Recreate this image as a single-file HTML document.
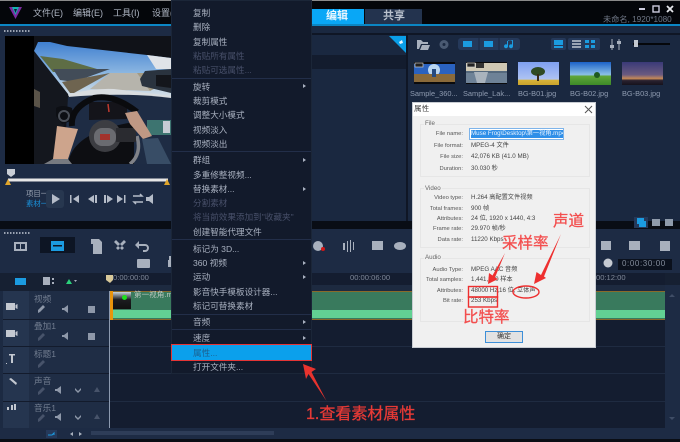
<!DOCTYPE html>
<html lang="zh"><head><meta charset="utf-8"><title>属性</title>
<style>
*{box-sizing:border-box}
html,body{margin:0;padding:0;background:#0b0f18}
#p{position:relative;width:680px;height:442px;overflow:hidden;background:#1c2a42;font-family:"Liberation Sans","Noto Sans CJK SC",sans-serif;filter:blur(.35px)}
#p div,#p svg{position:absolute}
.t{white-space:nowrap;line-height:12px;height:12px}
.m{left:193px;font-size:8.6px;color:#a9b1c0;white-space:nowrap;line-height:12px;height:12px}
.d{color:#48506a}
.a{left:303px;width:0;height:0;border-left:3px solid #a9b1c0;border-top:2px solid transparent;border-bottom:2px solid transparent}
.s{left:172px;width:139px;height:1px;background:#222e49}
.l{font-size:5.8px;color:#555;white-space:nowrap;line-height:10px;height:10px;right:217px;text-align:right}
.v{font-size:6.2px;color:#444;white-space:nowrap;line-height:10px;height:10px;left:471px}
.g{left:420px;width:170px;border:1px solid #e6e6e6}
.gt{left:424px;font-size:6.2px;color:#666;line-height:10px;height:10px;background:#f0f0f0;padding:0 1px}
.th{font-size:7.4px;color:#8f9bb0;white-space:nowrap;line-height:10px;height:10px;top:89px}
.tr{font-size:8.6px;color:#727d90;left:34px;line-height:12px;height:12px;white-space:nowrap}
.ann{color:#f34f4f;font-size:15.5px;-webkit-text-stroke:.3px currentColor;line-height:18px;height:18px;white-space:nowrap}
</style></head><body>
<div id="p">
<!-- top bar -->
<div style="left:0;top:0;width:680px;height:25px;background:#04060a"></div>
<div style="left:0;top:0;width:680px;height:1px;background:#8a8a8a"></div>
<div style="left:0;top:24px;width:680px;height:2px;background:#0b86c4"></div>
<svg style="left:9px;top:6px" width="13" height="13" viewBox="0 0 13 13"><path d="M0 1h13L6.500 13z" fill="#7b2ba0"/><path d="M3 1h7L6.500 9z" fill="#14b4b0"/><path d="M5 3h3L6.500 7z" fill="#101a30"/></svg>
<div class="t" style="left:33px;top:7px;font-size:9px;color:#aeb5c2">文件(E)</div>
<div class="t" style="left:73px;top:7px;font-size:9px;color:#aeb5c2">编辑(E)</div>
<div class="t" style="left:113px;top:7px;font-size:9px;color:#aeb5c2">工具(I)</div>
<div class="t" style="left:152px;top:7px;font-size:9px;color:#aeb5c2">设置(S)</div>
<div style="left:311px;top:9px;width:53px;height:15px;background:#09a7f6"></div>
<div class="t" style="left:326px;top:10px;font-size:11px;font-weight:bold;color:#e8f6ff">编辑</div>
<div style="left:365px;top:9px;width:57px;height:15px;background:#23334e"></div>
<div class="t" style="left:383px;top:10px;font-size:11px;font-weight:bold;color:#b8c0cc">共享</div>
<div class="t" style="left:603px;top:14px;font-size:8.2px;color:#6f7786">未命名, 1920*1080</div>
<svg style="left:636px;top:4px" width="40" height="10" viewBox="0 0 40 10"><path d="M3 5h6" stroke="#ccd" stroke-width="2"/><rect x="17" y="2" width="6" height="6" fill="none" stroke="#ccd" stroke-width="1.400"/><path d="M31 2l6 6M37 2l-6 6" stroke="#e4e6ea" stroke-width="1.800"/></svg>

<!-- preview -->
<div style="left:0;top:26px;width:171px;height:195px;background:#1d2b44"></div>
<div style="left:4px;top:30px;width:26px;height:2px;background-image:linear-gradient(90deg,#9aa3b2 50%,transparent 50%);background-size:3px 2px"></div>
<div style="left:5px;top:36px;width:166px;height:128px;background:#000"></div>
<svg style="left:34px;top:36px" width="137" height="128" viewBox="0 0 137 128">
<defs><linearGradient id="sk" x1="0" y1="0" x2="0" y2="1"><stop offset="0" stop-color="#3f7fd0"/><stop offset=".6" stop-color="#8fb9e2"/><stop offset="1" stop-color="#d5dfe6"/></linearGradient></defs>
<rect width="137" height="128" fill="#101218"/>
<path d="M0 15L4 6H16L33 10L113 19L137 22V60H34z" fill="url(#sk)"/>
<path d="M113 19L137 22V33L122 33z" fill="#dfe3e8"/>
<path d="M6 20L29 23L63 33L68 36H19z" fill="#5e6d45"/>
<path d="M19 33H76L40 46L26 44z" fill="#424c58"/>
<path d="M28 46L76 37L40 57H36z" fill="#6e6450"/>
<path d="M56 53L76 37H103L116 55z" fill="#b6b4ac"/>
<path d="M103 37H137V44L116 55z" fill="#a49a82"/>
<path d="M106 43L111 35L137 33V57L108 50z" fill="#2a333f"/>
<path d="M122 39H137V52L122 50z" fill="#14161c"/>
<path d="M36 58Q60 52 80 53L137 60V64L34 62z" fill="#d9dde0"/>
<path d="M0 15L34 58L36 66L20 128H0z" fill="#14171e"/>
<path d="M0 53L6 56V72L0 70z" fill="#5a5348"/>
<path d="M34 61Q90 56 137 62V128H30z" fill="#1e2c44"/>
<path d="M22 72Q28 68 38 72L40 84L28 88L22 80z" fill="#0d0f14"/><circle cx="30" cy="80" r="5" fill="none" stroke="#4a4f58" stroke-width="2"/>
<path d="M55 66H93V83L55 84z" fill="#14141a"/><path d="M74 68l1 8" stroke="#c03a30" stroke-width="1.500"/>
<path d="M34 128Q38 96 100 86V128z" fill="#0d0e12"/>
<path d="M113 84H137V99H113z" fill="#3d7470"/><path d="M129 85h7v12h-7z" fill="#c7ccd4"/>
<path d="M38 90Q36 72 60 62Q80 58 103 76" fill="none" stroke="#0a0b0e" stroke-width="6"/>
<path d="M103 100Q108 118 96 128" fill="none" stroke="#808288" stroke-width="3.500"/>
<circle cx="71" cy="100" r="16" fill="#3c3d42"/><rect x="60" y="92" width="22" height="18" rx="8" fill="#6a6b70"/><rect x="66" y="98" width="10" height="6" fill="#a3322c"/>
<path d="M82 92h20v14H82z" fill="#2a2b30"/>
<path d="M23 90L44 93L34 123L19 123z" fill="#cda48c"/><path d="M19 123L34 123L38 128H10z" fill="#777a80"/>
<path d="M91 77L103 75L118 100L109 103L96 88z" fill="#bf9884"/>
<path d="M108 103L124 102L137 128H113z" fill="#384d66"/>
</svg>
<svg style="left:5px;top:168px" width="166" height="18" viewBox="0 0 166 18"><path d="M2 1h8v5l-4 3-4-3z" fill="#c9ced6"/><rect x="3" y="10.500" width="160" height="3" fill="#e6e6e6"/><path d="M3 11l-3 6h6zM162 11l-3 6h6z" fill="#e0a52a"/></svg>
<div class="t" style="left:26px;top:188px;font-size:7.4px;color:#9aa3b2">项目一</div>
<div class="t" style="left:26px;top:198px;font-size:7.4px;color:#1a93dd">素材一</div>
<div style="left:46px;top:190px;width:18px;height:18px;background:#27374f;border-radius:3px"></div>
<svg style="left:46px;top:190px" width="115" height="18" viewBox="0 0 115 18" fill="#b5bcc8">
<path d="M6 4l8 5-8 5z"/><path d="M24 5h1.500v8H24zM33 5v8l-6-4z"/><path d="M48 5v8l-6-4zM49 5h2v8h-2z"/><path d="M58 5h2v8h-2zM61 5v8l6-4z"/><path d="M71 5l6 4-6 4zM78 5h1.500v8H78z"/>
<path d="M87 6h9l-2-2M97 12h-9l2 2" fill="none" stroke="#b5bcc8" stroke-width="1.500"/><path d="M100 7h3l4-3v10l-4-3h-3z"/></svg>

<!-- lower-left header strip -->
<div style="left:0;top:221px;width:680px;height:8px;background:#090d15"></div>
<!-- library panel -->
<div style="left:312px;top:26px;width:368px;height:195px;background:#1a2840"></div>
<div style="left:312px;top:55px;width:94px;height:14px;background:#131c2e"></div>
<div style="left:406px;top:35px;width:2px;height:186px;background:#0f1625"></div>
<div style="left:312px;top:33px;width:368px;height:2px;background:#0f1625"></div>
<svg style="left:389px;top:36px" width="17" height="17" viewBox="0 0 17 17"><path d="M0 0h17v17z" fill="#0a9fe8"/><path d="M10 6l3-2 1 3-3 1z" fill="#eaf6ff"/></svg>
<!-- lib toolbar -->
<svg style="left:416px;top:36px" width="262" height="16" viewBox="0 0 262 16">
<path d="M1 4h4l2 2h5v2H5l-2 5H1zM4 14l2-5h8l-2 5z" fill="#a8b0bd"/>
<circle cx="28" cy="8.500" r="4.500" fill="#4a5a72"/><circle cx="28" cy="8.500" r="1.500" fill="#1a2840"/>
<rect x="42" y="2" width="62" height="12" rx="3" fill="#25395a"/><path d="M63 2v12M83 2v12" stroke="#1a2840"/>
<rect x="47" y="5" width="9" height="6" fill="#1b9be0"/><rect x="68" y="5" width="9" height="6" fill="#1b9be0"/><path d="M92 4v6a2 2 0 1 1-1-1.500V5l6-1v6a2 2 0 1 1-1-1.500V5z" fill="#1b9be0"/>
<rect x="135" y="2" width="15" height="12" rx="2" fill="#25395a"/><rect x="152" y="2" width="32" height="12" rx="2" fill="#25395a"/>
<rect x="138" y="4" width="9" height="5" fill="#1b9be0"/><rect x="138" y="10" width="9" height="2" fill="#1b9be0"/>
<path d="M156 4h9v2h-9zM156 7h9v2h-9zM156 10h9v2h-9z" fill="#9aa5b5"/>
<path d="M169 4h4v3h-4zM175 4h4v3h-4zM169 9h4v3h-4zM175 9h4v3h-4z" fill="#1b9be0"/>
<path d="M196 3v11M203 3v11" stroke="#a8b0bd"/><rect x="194" y="9" width="4" height="3" fill="#a8b0bd"/><rect x="201" y="5" width="4" height="3" fill="#a8b0bd"/>
<rect x="217" y="7" width="37" height="2" fill="#05070b"/><rect x="218" y="4" width="4" height="7" fill="#c4c9d1"/>
</svg>
<!-- thumbs -->
<svg style="left:414px;top:62px" width="41" height="22" viewBox="0 0 41 22"><rect width="41" height="22" fill="#0a0a0c"/><rect y="2" width="41" height="11" fill="#2a62c0"/><circle cx="20" cy="8" r="6" fill="#b9d6f2"/><rect y="12" width="41" height="8" fill="#8a6a3a"/><path d="M18 7h4v8h-4z" fill="#254a80"/><rect x="1" y="1" width="8" height="4" fill="#222" stroke="#ccc" stroke-width=".7"/></svg>
<svg style="left:466px;top:62px" width="41" height="22" viewBox="0 0 41 22"><rect width="41" height="22" fill="#0a0a0c"/><rect y="1" width="41" height="9" fill="#cfc8b4"/><rect y="9" width="41" height="2" fill="#55697d"/><rect y="11" width="41" height="10" fill="#6e8297"/><path d="M8 10h14l-3 11H11z" fill="#a9b3bd"/><rect x="1" y="1" width="8" height="4" fill="#222" stroke="#ccc" stroke-width=".7"/><rect x="10" y="1" width="8" height="5" fill="#333"/></svg>
<div style="left:518px;top:62px;width:41px;height:23px;background:linear-gradient(#7fa0f0,#aec3f3 75%,#d8b43a 78%,#caa32c)"></div>
<div style="left:570px;top:62px;width:41px;height:23px;background:linear-gradient(#1c62c8,#8cc0e8 55%,#5fa63a 62%,#3d8a28)"></div>
<div style="left:622px;top:62px;width:41px;height:23px;background:linear-gradient(#3a3a78,#6a5a80 55%,#c88a58 72%,#2a2230 80%,#16121c)"></div>
<div style="left:531px;top:67px;width:14px;height:9px;border-radius:50%;background:#2f4a24"></div><div style="left:537px;top:74px;width:2px;height:7px;background:#3a2a18"></div>
<div style="left:594px;top:72px;width:6px;height:6px;border-radius:50%;background:#1f5a20"></div>
<div class="th" style="left:410px">Sample_360...</div>
<div class="th" style="left:463px">Sample_Lak...</div>
<div class="th" style="left:518px">BG-B01.jpg</div>
<div class="th" style="left:570px">BG-B02.jpg</div>
<div class="th" style="left:622px">BG-B03.jpg</div>
<svg style="left:634px;top:216px" width="42" height="12" viewBox="0 0 42 12"><rect x="0" y="1" width="14" height="11" fill="#25395a"/><rect x="3" y="2" width="7" height="6" fill="#1b9be0"/><rect x="5" y="5" width="7" height="6" fill="#1b9be0"/><path d="M18 3h8v7h-8zM31 3h8v7h-8z" fill="#8f9bab"/></svg>

<!-- timeline toolbar -->
<div style="left:0;top:229px;width:680px;height:44px;background:#1d2b44"></div>
<div style="left:4px;top:232px;width:26px;height:2px;background-image:linear-gradient(90deg,#9aa3b2 50%,transparent 50%);background-size:3px 2px"></div>
<div style="left:40px;top:237px;width:35px;height:16px;background:#0d1524"></div>
<svg style="left:0;top:232px" width="680" height="40" viewBox="0 0 680 40" fill="#a8b0bd">
<path d="M14 10h13v9H14zM16 12v5h4v-5zM21 12v5h4v-5z" fill-rule="evenodd"/>
<rect x="51" y="9" width="13" height="10" fill="#1b9be0"/><rect x="53" y="13" width="9" height="1.500" fill="#0d1524"/>
<path d="M91 7h8l3 3v12h-9V12h-2z"/><path d="M116 8l8 8-2 2-8-8zM124 8l-8 8 2 2 8-8z"/><path d="M139 12h6a4 4 0 0 1 0 8h-2v-2h2a2 2 0 0 0 0-4h-6v3l-4-4 4-4z"/>
<rect x="137" y="27" width="13" height="9" rx="1"/><path d="M168 28h5v7h-5zM169 24h3v4h-3z"/>
<circle cx="318" cy="14" r="5"/><circle cx="323" cy="17" r="2" fill="#d01818"/>
<path d="M343 11h2v7h-2zM347 9h1v11h-1zM350 8h1v12h-1zM353 10h1v8h-1z"/><path d="M372 9h11v9h-11z"/><ellipse cx="400" cy="14" rx="6" ry="4"/>
<path d="M601 9h10v9h-10z"/><path d="M629 9h11v9h-11z"/><path d="M660 9h10v10h-10z"/>
<circle cx="608" cy="31" r="4.500" fill="#c5cad2"/>
</svg>
<div style="left:618px;top:259px;width:54px;height:11px;background:#0b111d"></div>
<div class="t" style="left:622px;top:258px;font-size:8px;letter-spacing:.6px;color:#828b9a">0:00:30:00</div>

<!-- ruler -->
<div style="left:0;top:273px;width:680px;height:18px;background:#162032"></div>
<div style="left:110px;top:273px;width:555px;height:12px;background:#141d30"></div>
<div style="left:110px;top:285px;width:555px;height:6px;background:#1d2a40"></div>
<div class="t" style="left:113px;top:272px;font-size:7.6px;color:#7f8899">0:00:00:00</div>
<div class="t" style="left:350px;top:272px;font-size:7.6px;color:#7f8899">00:00:06:00</div>
<div class="t" style="left:596px;top:272px;font-size:7.6px;color:#7f8899">00:12:00</div>
<svg style="left:10px;top:275px" width="104" height="12" viewBox="0 0 104 12"><path d="M5 3h11v7H5z" fill="#1b9be0"/><path d="M33 2h7v8h-7zM42 3h2v2h-2zM42 7h2v2h-2z" fill="#a8b0bd"/><path d="M56 9l3-5 3 5z" fill="#2bd07a"/><path d="M64 5h3l-1.500 2z" fill="#a8b0bd"/><path d="M96 0h7v5l-3 3-4-3z" fill="#d8c99a"/></svg>

<!-- track headers -->
<div style="left:3px;top:291px;width:106px;height:137px;background:#1f2d45"></div>
<div style="left:3px;top:291px;width:26px;height:137px;background:#25354f"></div>
<div style="left:3px;top:319px;width:106px;height:1px;background:#131b2c"></div>
<div style="left:3px;top:346px;width:106px;height:1px;background:#131b2c"></div>
<div style="left:3px;top:373px;width:106px;height:1px;background:#131b2c"></div>
<div style="left:3px;top:401px;width:106px;height:1px;background:#131b2c"></div>
<div class="tr" style="top:293px">视频</div><div class="tr" style="top:320px">叠加1</div><div class="tr" style="top:348px">标题1</div><div class="tr" style="top:375px">声音</div><div class="tr" style="top:402px">音乐1</div>
<svg style="left:3px;top:291px" width="106" height="137" viewBox="0 0 106 137" fill="#c3c8d0">
<path d="M3 12h9v7H3zM12.500 14l2-1v5l-2-1z"/><path d="M3 39h9v7H3zM12.500 41l2-1v5l-2-1z"/>
<path d="M3 72h1v1H3zM6 63h6v1.500h-2V72H8v-7.500H6z"/><path d="M6 88l2-1 6 5-1 2z"/><path d="M4 116h2v3H4zM8 114h2v5H8zM11 113h2v6h-2z"/>
<g fill="#8e98a9"><path d="M35 19l5-5 2 2-5 5-2 1zM59 17h2l4-3v8l-4-3h-2zM85 15h7v7h-7z"/><path d="M59 44h2l4-3v8l-4-3h-2zM85 42h7v7h-7z"/><path d="M52 98h2l4-3v8l-4-3h-2zM52 125h2l4-3v8l-4-3h-2z"/><path d="M72 99l3 3 3-3v-2l-3 3-3-3zM72 126l3 3 3-3v-2l-3 3-3-3z"/></g>
<g fill="#47536a"><path d="M35 47l5-5 2 2-5 5-2 1zM35 74l5-5 2 2-5 5-2 1zM35 101l5-5 2 2-5 5-2 1zM35 128l5-5 2 2-5 5-2 1zM91 101l3-5 3 5zM91 128l3-5 3 5z"/></g>
</svg>
<!-- tracks -->
<div style="left:109px;top:291px;width:556px;height:137px;background:#141d30"></div>
<div style="left:109px;top:291px;width:1px;height:137px;background:#8c9ab0"></div>
<div style="left:110px;top:319px;width:555px;height:1px;background:#1f2b41"></div>
<div style="left:110px;top:346px;width:555px;height:1px;background:#1f2b41"></div>
<div style="left:110px;top:373px;width:555px;height:1px;background:#1f2b41"></div>
<div style="left:110px;top:401px;width:555px;height:1px;background:#1f2b41"></div>
<div style="left:110px;top:291px;width:555px;height:29px;background:#397a5d;border-top:1px solid #8a6a2a;border-bottom:1px solid #8a6a2a"></div>
<div style="left:113px;top:310px;width:552px;height:8px;background:#62d193"></div>
<div style="left:110px;top:291px;width:3px;height:29px;background:#e8940c"></div>
<div style="left:113px;top:292px;width:18px;height:17px;background:linear-gradient(#c9d4dd,#1c1c20 45%,#111)"></div>
<div style="left:122px;top:295px;width:5px;height:5px;border-radius:50%;background:#1de01d"></div>
<div class="t" style="left:134px;top:289px;font-size:7.6px;color:#b9c5bf">第一视角.mp4</div>
<!-- scrollbar, bottom -->
<div style="left:665px;top:285px;width:15px;height:143px;background:#1d2b44"></div>
<svg style="left:668px;top:292px" width="8" height="130" viewBox="0 0 8 130" fill="#3f4d66"><path d="M1 5l3-3 3 3zM1 125l3 3 3-3z"/></svg>
<div style="left:0;top:428px;width:680px;height:12px;background:#1d2b44"></div>
<div style="left:0;top:439px;width:680px;height:3px;background:#0a0e15"></div>
<div style="left:91px;top:431px;width:183px;height:4px;background:#2e3d58"></div>
<svg style="left:46px;top:429px" width="40" height="10" viewBox="0 0 40 10"><rect width="11" height="8" y="1" fill="#25395a"/><path d="M2 6h4l2-2v2" stroke="#1b9be0" fill="none"/><path d="M24 5l3-2v4zM33 3l3 2-3 2z" fill="#a8b0bd"/></svg>

<!-- context menu -->
<div style="left:171px;top:0;width:141px;height:374px;background:#121a2b;border:1px solid #1b2638"></div>
<div class="m" style="top:7px">复制</div>
<div class="m" style="top:21px">删除</div>
<div class="m" style="top:36px">复制属性</div>
<div class="m d" style="top:50px">粘贴所有属性</div>
<div class="m d" style="top:64px">粘贴可选属性...</div>
<div class="s" style="top:78px"></div>
<div class="m" style="top:81px">旋转</div><div class="a" style="top:84px"></div>
<div class="m" style="top:95px">裁剪模式</div>
<div class="m" style="top:109px">调整大小模式</div>
<div class="m" style="top:124px">视频淡入</div>
<div class="m" style="top:138px">视频淡出</div>
<div class="s" style="top:151px"></div>
<div class="m" style="top:154px">群组</div><div class="a" style="top:158px"></div>
<div class="m" style="top:169px">多重修整视频...</div>
<div class="m" style="top:183px">替换素材...</div><div class="a" style="top:187px"></div>
<div class="m d" style="top:197px">分割素材</div>
<div class="m d" style="top:211px">将当前效果添加到"收藏夹"</div>
<div class="m" style="top:226px">创建智能代理文件</div>
<div class="s" style="top:239px"></div>
<div class="m" style="top:243px">标记为 3D...</div>
<div class="m" style="top:257px">360 视频</div><div class="a" style="top:261px"></div>
<div class="m" style="top:271px">运动</div><div class="a" style="top:275px"></div>
<div class="m" style="top:286px">影音快手模板设计器...</div>
<div class="m" style="top:300px">标记可替换素材</div>
<div class="s" style="top:314px"></div>
<div class="m" style="top:316px">音频</div><div class="a" style="top:320px"></div>
<div class="s" style="top:329px"></div>
<div class="m" style="top:332px">速度</div><div class="a" style="top:336px"></div>
<div style="left:171px;top:344px;width:141px;height:17px;background:#0ba0ec;border:1.500px solid #e53535"></div>
<div class="m" style="top:347px;color:#1d5f8e">属性...</div>
<div class="m" style="top:361px">打开文件夹...</div>

<!-- dialog -->
<div style="left:412px;top:102px;width:184px;height:246px;background:#f0f0f0;border:1px solid #c8ccd2"></div>
<div style="left:413px;top:103px;width:182px;height:13px;background:#fff"></div>
<div class="t" style="left:414px;top:103px;font-size:7.6px;color:#444">属性</div>
<svg style="left:584px;top:105px" width="9" height="9" viewBox="0 0 9 9"><path d="M1 1l7 7M8 1l-7 7" stroke="#555"/></svg>
<div class="g" style="top:124px;height:53px"></div><div class="gt" style="top:119px">File</div>
<div class="g" style="top:188px;height:60px"></div><div class="gt" style="top:184px">Video</div>
<div class="g" style="top:258px;height:64px"></div><div class="gt" style="top:253px">Audio</div>
<div class="l" style="top:129px">File name:</div>
<div style="left:469px;top:128px;width:95px;height:12px;background:#fff;border:1px solid #7eb4ea"></div>
<div style="left:471px;top:130px;width:92px;height:8px;background:#2f8fe8"></div>
<div class="v" style="top:129px;color:#e8f3ff;width:92px;overflow:hidden">Muse Frog\Desktop\第一视角.mp4</div>
<div class="l" style="top:141px">File format:</div><div class="v" style="top:141px">MPEG-4 文件</div>
<div class="l" style="top:152px">File size:</div><div class="v" style="top:152px">42,076 KB (41.0 MB)</div>
<div class="l" style="top:164px">Duration:</div><div class="v" style="top:164px">30.030 秒</div>
<div class="l" style="top:193px">Video type:</div><div class="v" style="top:193px">H.264 高配置文件视频</div>
<div class="l" style="top:204px">Total frames:</div><div class="v" style="top:204px">900 帧</div>
<div class="l" style="top:214px">Attributes:</div><div class="v" style="top:214px">24 位, 1920 x 1440, 4:3</div>
<div class="l" style="top:224px">Frame rate:</div><div class="v" style="top:224px">29.970 帧/秒</div>
<div class="l" style="top:235px">Data rate:</div><div class="v" style="top:235px">11220 Kbps</div>
<div class="l" style="top:265px">Audio Type:</div><div class="v" style="top:265px">MPEG AAC 音频</div>
<div class="l" style="top:275px">Total samples:</div><div class="v" style="top:275px">1,441,280 样本</div>
<div class="l" style="top:286px">Attributes:</div><div class="v" style="top:286px">48000 Hz,</div><div class="v" style="top:286px;left:499px">16 位,</div><div class="v" style="top:286px;left:517px">立体声</div>
<div class="l" style="top:296px">Bit rate:</div><div class="v" style="top:296px">253 Kbps</div>
<div style="left:485px;top:331px;width:38px;height:12px;background:#e2e2e2;border:1px solid #3d8fd8"></div>
<div class="t" style="left:497px;top:331px;font-size:7px;color:#333">确定</div>

<!-- annotations -->
<svg style="left:0;top:0" width="680" height="442" viewBox="0 0 680 442">
<g fill="none" stroke="#ee2f2f" stroke-width="1.400"><rect x="468.500" y="286.500" width="29" height="10.500"/><rect x="468.500" y="297" width="29" height="10"/><ellipse cx="526" cy="292" rx="13" ry="6"/></g>
<path d="M488 284L489 273L492.500 275.500L505 253L495 277.500L498 279Z" fill="#ee2f2f"/>
<path d="M534 284L536.500 272L541 275L561 234L544 276.500L546 278Z" fill="#ee2f2f"/>
<path d="M303 364L316 369L311.500 372L326.500 401L308.500 374L306 379Z" fill="#e8332e"/>
</svg>
<div class="ann" style="left:502px;top:235px">采样率</div>
<div class="ann" style="left:553px;top:213px">声道</div>
<div class="ann" style="left:463px;top:309px">比特率</div>
<div class="ann" style="left:306px;top:406px;font-size:16px;color:#e63a36">1.查看素材属性</div>
</div>
</body></html>
